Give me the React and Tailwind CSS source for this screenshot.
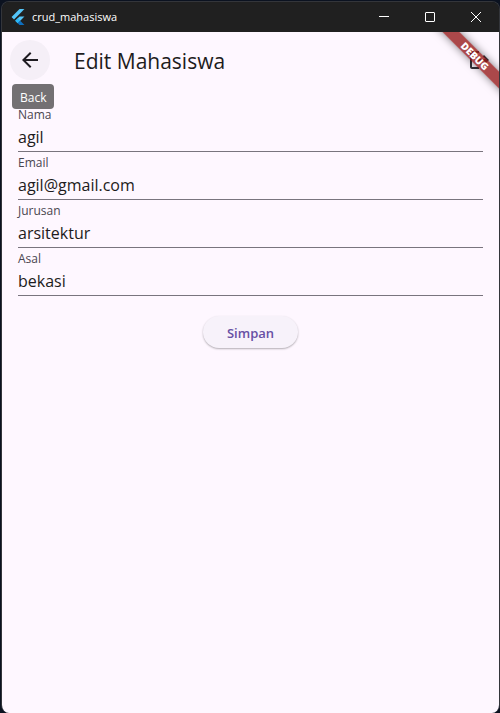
import { useId, useState } from "react";

function FlutterLogo() {
  return (
    <svg viewBox="0 0 24 24" className="h-4 w-4" aria-hidden="true">
      <path d="M14.3 0 2.3 12l3.7 3.7L21.7 0z" fill="#54c5f8" />
      <path d="M14.3 11.1 7.9 17.5l3.7 3.7 10.1-10.1z" fill="#54c5f8" />
      <path d="M7.9 17.5l3.7-3.7 3.7 3.7-3.7 3.7z" fill="#29b6f6" />
      <path d="M11.6 21.2l3.7-3.7L21.7 24h-7.4z" fill="#0d6fc0" />
    </svg>
  );
}

function TitleBar() {
  const control = "flex h-full w-[46px] items-center justify-center text-white";
  return (
    <header className="flex h-[30px] shrink-0 items-center bg-[#202020] pl-2">
      <FlutterLogo />
      <span className="ml-[6px] flex-1 text-[11px] leading-4 text-white">crud_mahasiswa</span>
      <button type="button" aria-label="Minimize" className={control}>
        <svg viewBox="0 0 10 10" className="h-[10px] w-[10px]" shapeRendering="crispEdges">
          <path d="M0 4h10v1H0z" fill="currentColor" />
        </svg>
      </button>
      <button type="button" aria-label="Maximize" className={control}>
        <svg viewBox="0 0 10 10" className="h-[10px] w-[10px]" fill="none" stroke="currentColor">
          <rect x="0.5" y="0.5" width="9" height="9" rx="0.5" />
        </svg>
      </button>
      <button type="button" aria-label="Close" className={control}>
        <svg viewBox="0 0 10 10" className="h-[10px] w-[10px]" fill="none" stroke="currentColor">
          <path d="M0 0l10 10M10 0L0 10" />
        </svg>
      </button>
    </header>
  );
}

function AppBar() {
  return (
    <div className="flex h-14 items-center pl-2">
      <div className="relative">
        <button
          type="button"
          aria-label="Back"
          className="flex h-10 w-10 items-center justify-center rounded-full bg-[#f5eff7] text-[#1d1b20]"
        >
          <svg viewBox="0 0 24 24" className="h-6 w-6" fill="currentColor">
            <path d="M20 11H7.83l5.59-5.59L12 4l-8 8 8 8 1.41-1.41L7.83 13H20v-2z" />
          </svg>
        </button>
        <span
          role="tooltip"
          className="absolute left-[2px] top-11 flex h-[25px] items-center rounded bg-[#737073] px-2 pt-[2px] text-[12px] leading-4 text-white"
        >
          Back
        </span>
      </div>
      <h1 className="ml-6 flex-1 pt-px text-[21px] leading-7 text-[#1d1b20]">Edit Mahasiswa</h1>
      <button
        type="button"
        aria-label="Logout"
        className="flex h-10 w-10 items-center justify-center text-[#35323a]"
      >
        <svg viewBox="0 0 24 24" className="h-6 w-6" fill="currentColor">
          <path d="M17 7l-1.41 1.41L18.17 11H9v2h9.17l-2.58 2.58L17 17l5-5-5-5zM5 5h7V3H5c-1.1 0-2 .9-2 2v14c0 1.1.9 2 2 2h7v-2H5V5z" />
        </svg>
      </button>
    </div>
  );
}

function Field({ label, initial }) {
  const id = useId();
  const [value, setValue] = useState(initial);
  return (
    <div className="flex h-12 flex-col border-b border-[#79747e] pt-[3px]">
      <label htmlFor={id} className="text-[12px] leading-4 text-[#49454f]">
        {label}
      </label>
      <input
        id={id}
        value={value}
        onChange={(e) => setValue(e.target.value)}
        className="h-7 w-full bg-transparent text-[16px] leading-6 text-[#1d1b20] outline-none"
      />
    </div>
  );
}

function DebugBanner() {
  return (
    <div className="pointer-events-none absolute -right-[36px] top-[18px] flex h-3 w-[120px] rotate-45 items-center justify-center bg-[#931717]/78 text-[10px] font-black leading-3 text-white shadow-[0_0_8px_rgba(0,0,0,0.5)]">
      DEBUG
    </div>
  );
}

export default function App() {
  return (
    <div className="flex min-h-screen flex-col bg-[#0b1220] pl-px pt-px font-['Open_Sans','Noto_Sans',sans-serif]">
      <div className="flex flex-1 flex-col overflow-hidden rounded-lg border border-b-0 border-[#33353a]">
        <TitleBar />
        <main className="relative flex-1 overflow-hidden bg-[#fef7ff]">
          <AppBar />
          <form className="p-4" onSubmit={(e) => e.preventDefault()}>
            <Field label="Nama" initial="agil" />
            <Field label="Email" initial="agil@gmail.com" />
            <Field label="Jurusan" initial="arsitektur" />
            <Field label="Asal" initial="bekasi" />
            <div className="mt-5 flex justify-center">
              <button
                type="submit"
                className="h-8 rounded-full bg-[#f7f2fa] px-6 pt-px text-[13px] font-semibold leading-5 text-[#6750a4] shadow-[0_1px_2px_rgba(0,0,0,0.3)]"
              >
                Simpan
              </button>
            </div>
          </form>
          <DebugBanner />
        </main>
      </div>
    </div>
  );
}
